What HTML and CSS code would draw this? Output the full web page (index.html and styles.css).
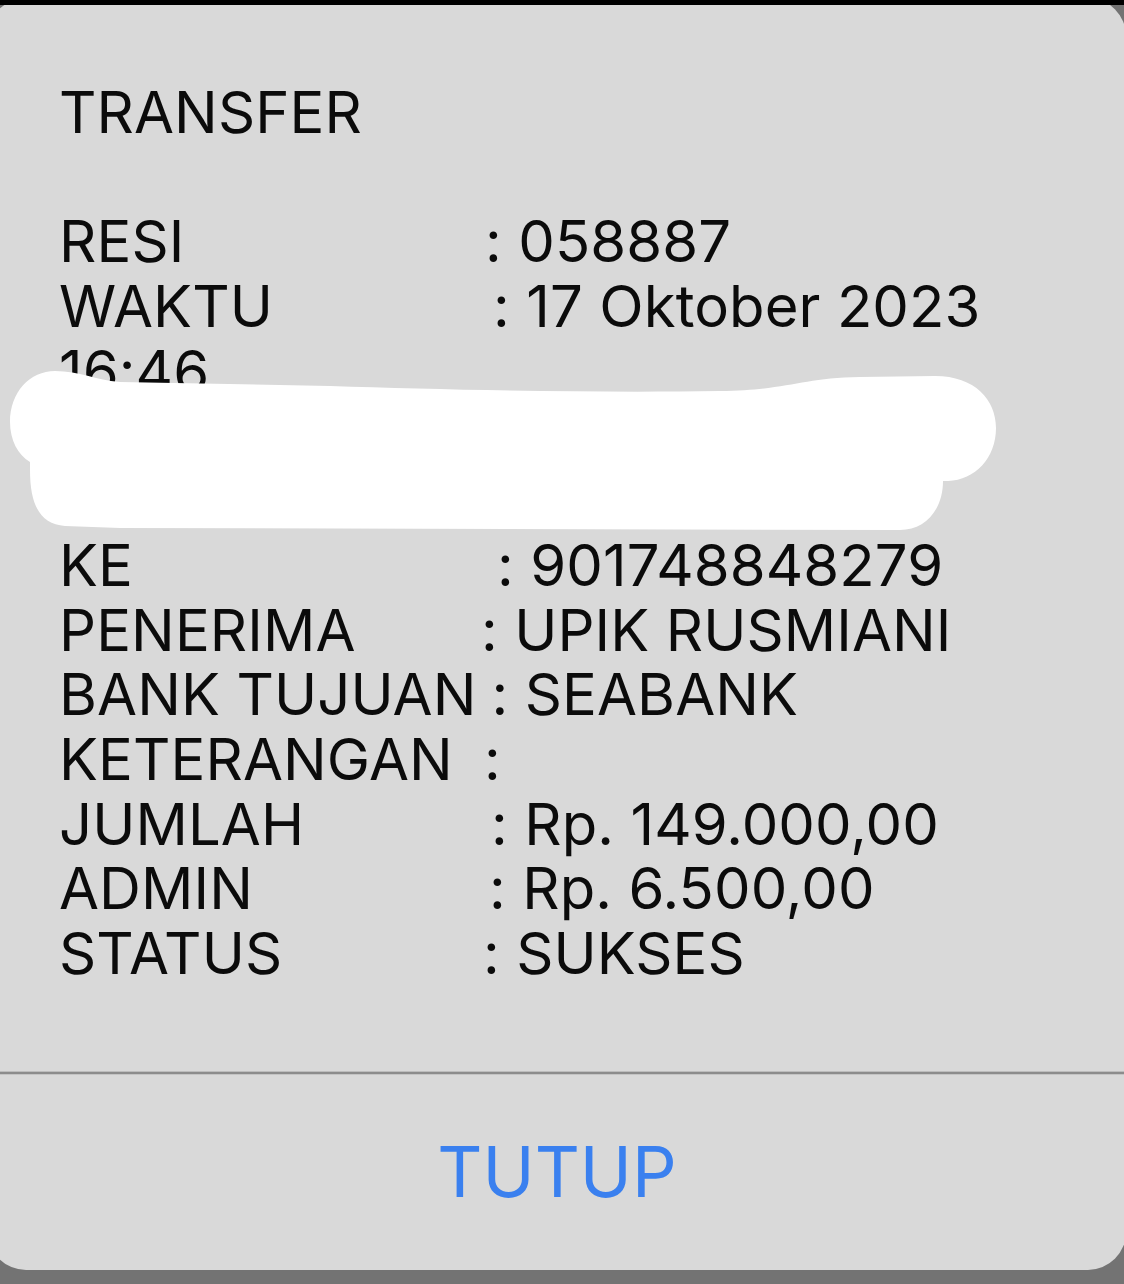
FILE: index.html
```html
<!DOCTYPE html>
<html lang="id">
<head>
<meta charset="utf-8">
<title>Transfer</title>
<link rel="stylesheet" href="styles.css">
</head>
<body>
<div class="topbar"></div>
<div class="dialog">
  <div class="msg">
    <div class="ln">TRANSFER</div>
    <div class="ln">&nbsp;</div>
    <div class="ln"><span class="k k-resi">RESI</span>: 058887</div>
    <div class="ln"><span class="k k-waktu">WAKTU</span>: 17 Oktober 2023 16:46</div>
    <div class="ln">&nbsp;</div>
    <div class="ln">&nbsp;</div>
    <div class="ln"><span class="k k-ke">KE</span>: 901748848279</div>
    <div class="ln"><span class="k k-penerima">PENERIMA</span>: UPIK RUSMIANI</div>
    <div class="ln"><span class="k k-bank">BANK TUJUAN</span>: SEABANK</div>
    <div class="ln"><span class="k k-ket">KETERANGAN</span>:</div>
    <div class="ln"><span class="k k-jumlah">JUMLAH</span>: Rp. 149.000,00</div>
    <div class="ln"><span class="k k-admin">ADMIN</span>: Rp. 6.500,00</div>
    <div class="ln"><span class="k k-status">STATUS</span>: SUKSES</div>
  </div>
  <div class="sep"></div>
  <div class="btn">TUTUP</div>
</div>
<svg class="redact" viewBox="0 0 1124 600" width="1124" height="600" aria-hidden="true">
  <path fill="#ffffff" d="M 55 371 C 80 371, 95 380, 120 382 L 330 386 C 450 390, 600 393, 720 391 C 790 390, 800 378, 860 377 L 935 376 C 975 376, 996 400, 996 428 C 996 458, 975 480, 948 481 L 943 481 C 943 510, 925 530, 900 530 L 120 528 L 65 526 C 40 524, 30 505, 30 470 L 30 462 C 18 455, 10 440, 10 422 C 10 392, 30 371, 55 371 Z"/>
</svg>
</body>
</html>
```

FILE: styles.css
```css
html, body {
  margin: 0;
  padding: 0;
  overflow: hidden;
}
body {
  position: relative;
  width: 1124px;
  height: 1284px;
  background: #737373;
  font-family: "Inter", "Noto Sans", "Liberation Sans", sans-serif;
  font-feature-settings: "calt" 0;
}
.topbar {
  position: absolute;
  top: 0;
  left: 0;
  right: 0;
  height: 5px;
  background: #000;
  z-index: 3;
}
.dialog {
  margin: -2px 0 0 -12px;
  width: 1138px;
  height: 1272px;
  background: #d9d9d9;
  border-radius: 38px;
  display: flex;
  flex-direction: column;
  box-sizing: border-box;
}
.msg {
  flex: 1;
  padding: 82px 66px 0 71px;
  color: #0b0b0b;
  font-size: 58px;
  line-height: 64.7px;
  font-weight: 400;
  letter-spacing: 0.1px;
}
.ln {
  white-space: normal;
}
.k {
  display: inline-block;
}
.k-resi { width: 426px; }
.k-waktu { width: 434px; }
.k-ke { width: 438px; }
.k-penerima { width: 422px; }
.k-bank { width: auto; margin-right: 15px; }
.k-ket { width: 425px; }
.k-jumlah { width: 432px; }
.k-admin { width: 430px; }
.k-status { width: 424px; }
.sep {
  height: 2px;
  background: #8c8c8c;
  box-shadow: 0 -1px 0 #bdbdbd, 0 1px 0 #c4c4c4;
}
.btn {
  height: 196px;
  display: flex;
  align-items: center;
  justify-content: center;
  color: #3a80ef;
  font-size: 70px;
  padding-bottom: 2px;
  box-sizing: border-box;
}
.redact {
  position: absolute;
  top: 0;
  left: 0;
  z-index: 2;
}
```
